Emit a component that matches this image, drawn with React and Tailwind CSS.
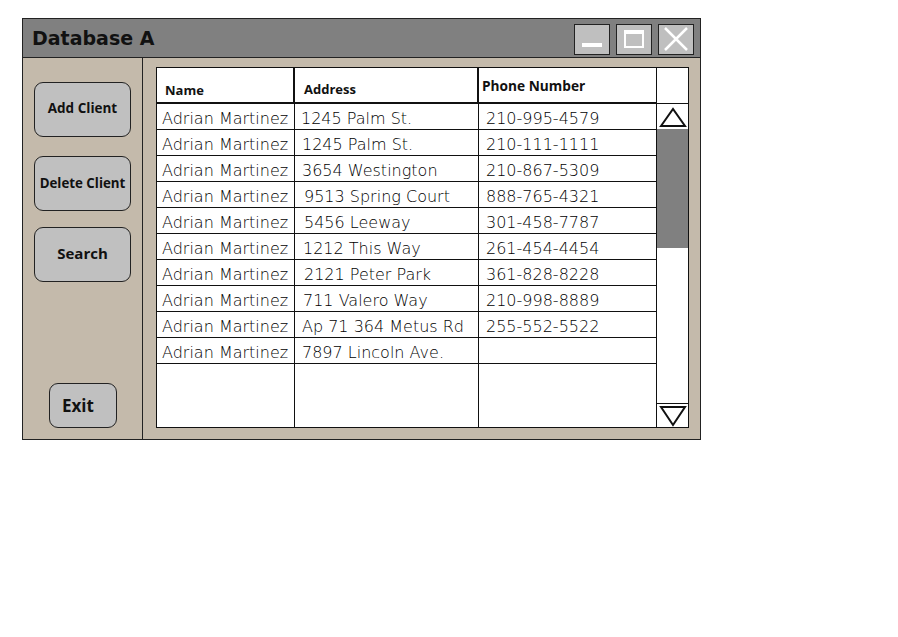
import React from 'react';

const rows = [
  { name: 'Adrian Martinez', address: '1245 Palm St.', phone: '210-995-4579', ad: 'pl-[6px]' },
  { name: 'Adrian Martinez', address: '1245 Palm St.', phone: '210-111-1111', ad: 'pl-[7px]' },
  { name: 'Adrian Martinez', address: '3654 Westington', phone: '210-867-5309', ad: 'pl-[7px]' },
  { name: 'Adrian Martinez', address: '9513 Spring Court', phone: '888-765-4321', ad: 'pl-[9px]' },
  { name: 'Adrian Martinez', address: '5456 Leeway', phone: '301-458-7787', ad: 'pl-[9px]' },
  { name: 'Adrian Martinez', address: '1212 This Way', phone: '261-454-4454', ad: 'pl-[8px]' },
  { name: 'Adrian Martinez', address: '2121 Peter Park', phone: '361-828-8228', ad: 'pl-[9px]' },
  { name: 'Adrian Martinez', address: '711 Valero Way', phone: '210-998-8889', ad: 'pl-[8px]' },
  { name: 'Adrian Martinez', address: 'Ap 71 364 Metus Rd', phone: '255-552-5522', ad: 'pl-[7px]' },
  { name: 'Adrian Martinez', address: '7897 Lincoln Ave.', phone: '', ad: 'pl-[7px]' },
];

const sans = { fontFamily: '"Open Sans", "DejaVu Sans", sans-serif' };

const SideButton = ({ label, className }) => (
  <button
    className={`flex items-center justify-center bg-[#c0c0c0] border border-[#222] rounded-[9px] font-bold text-[#111] ${className}`}
    style={sans}
  >
    {label}
  </button>
);

const App = () => {
  return (
    <div className="w-[898px] h-[637px] bg-white pt-[18px] pl-[22px]">
      <div className="w-[679px] h-[422px] border border-[#222] flex flex-col bg-[#c4baab]">
        {/* title bar */}
        <div className="h-[39px] bg-[#808080] border-b border-[#222] flex items-center justify-between pl-[9px] pr-[6px]">
          <span className="text-[19px] font-bold text-[#111] pt-[1px]" style={{ fontFamily: '"DejaVu Sans", sans-serif' }}>
            Database A
          </span>
          <div className="flex gap-[6px] pt-[2px]">
            <div className="w-[36px] h-[31px] bg-[#bfbfbf] border border-[#222] flex items-end justify-center pb-[7px]">
              <div className="w-[20px] h-[4px] bg-white" />
            </div>
            <div className="w-[36px] h-[31px] bg-[#bfbfbf] border border-[#222] flex items-center justify-center">
              <div className="w-[20px] h-[18px] border-2 border-t-[4px] border-white" />
            </div>
            <div className="w-[36px] h-[31px] bg-[#bfbfbf] border border-[#222] flex items-center justify-center">
              <svg width="26" height="24" viewBox="0 0 26 24">
                <path d="M2 1 L24 23 M24 1 L2 23" stroke="white" strokeWidth="2.5" fill="none" />
              </svg>
            </div>
          </div>
        </div>

        {/* body */}
        <div className="flex-1 flex">
          <div className="w-[120px] border-r border-[#222] flex flex-col pl-[11px] pt-[24px] pb-[11px]">
            <SideButton label="Add Client" className="w-[97px] h-[55px] text-[13.5px] pb-[3px]" />
            <SideButton label="Delete Client" className="w-[97px] h-[55px] text-[13.3px] mt-[19px] pt-[1px]" />
            <SideButton label="Search" className="w-[97px] h-[55px] text-[15px] mt-[16px] pb-[3px]" />
            <div className="flex-1" />
            <SideButton label="Exit" className="w-[68px] h-[45px] text-[17px] ml-[15px] pt-[1px] justify-start pl-[12px]" />
          </div>

          <div className="flex-1 pl-[13px] pt-[9px]">
            <div className="w-[533px] h-[361px] bg-white border border-[#111] flex">
              {/* columns */}
              <div className="w-[499px] flex flex-col">
                <div className="h-[36px] flex border-b-2 border-[#111] font-bold text-[#111]" style={sans}>
                  <div className="w-[138px] border-r-2 border-[#111] pl-[8px] pt-[13px] text-[13px]">Name</div>
                  <div className="w-[184px] border-r-2 border-[#111] pl-[9px] pt-[12px] text-[13px]">Address</div>
                  <div className="flex-1 pl-[3px] pt-[8px] text-[13.7px]">Phone Number</div>
                </div>
                <div className="flex-1 flex flex-col text-[16px] font-extralight text-black" style={{ fontFamily: '"DejaVu Sans", sans-serif' }}>
                  {rows.map((r, i) => (
                    <div key={i} className="h-[26px] flex border-b border-[#111] leading-[25px]">
                      <div className="w-[138px] border-r border-[#111] pl-[5px] pt-[2px] whitespace-nowrap">{r.name}</div>
                      <div className={`w-[184px] border-r border-[#111] pt-[2px] whitespace-nowrap ${r.ad}`}>{r.address}</div>
                      <div className="flex-1 pl-[7px] pt-[2px] whitespace-nowrap">{r.phone}</div>
                    </div>
                  ))}
                  <div className="flex-1 flex">
                    <div className="w-[138px] border-r border-[#111]" />
                    <div className="w-[184px] border-r border-[#111]" />
                    <div className="flex-1" />
                  </div>
                </div>
              </div>

              {/* scrollbar */}
              <div className="flex-1 border-l border-[#111] flex flex-col">
                <div className="h-[36px] border-b border-[#111]" />
                <div className="h-[25px] flex items-center justify-center">
                  <svg width="28" height="22" viewBox="0 0 28 22">
                    <path d="M2 20 L14 3 L26 20 Z" stroke="#111" strokeWidth="2" fill="none" />
                  </svg>
                </div>
                <div className="h-[119px] bg-[#808080]" />
                <div className="flex-1" />
                <div className="h-[24px] border-t border-[#111] flex items-center justify-center">
                  <svg width="28" height="22" viewBox="0 0 28 22">
                    <path d="M2 2 L14 20 L26 2 Z" stroke="#111" strokeWidth="2" fill="none" />
                  </svg>
                </div>
              </div>
            </div>
          </div>
        </div>
      </div>
    </div>
  );
};

export default App;
